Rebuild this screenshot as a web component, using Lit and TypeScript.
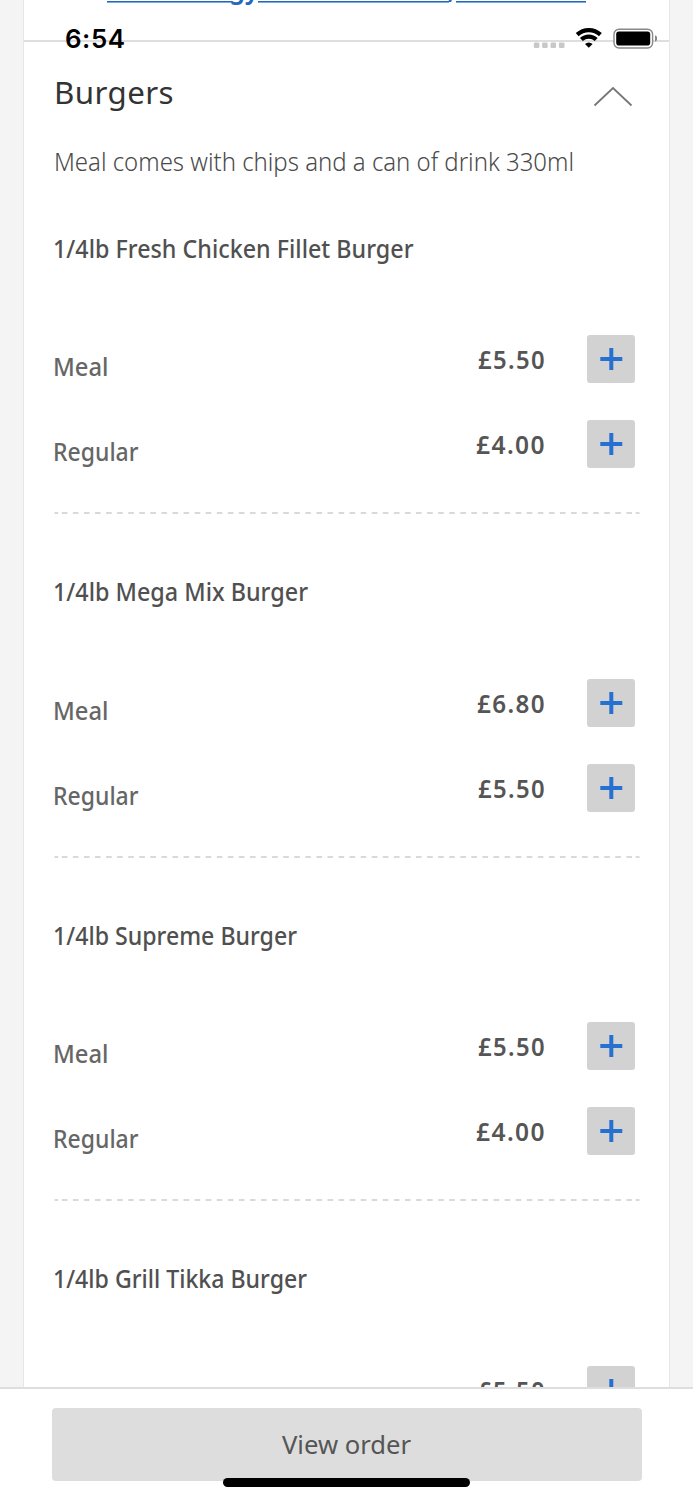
import { LitElement, html, svg, css } from "lit";
import { customElement, property } from "lit/decorators.js";

/** One line of text set to an exact advance width, with its baseline 24px below its top. */
@customElement("fit-text")
class FitText extends LitElement {
  @property() text = "";
  @property({ type: Number }) width = 100;
  static styles = css`
    :host { display: block; height: 32px; }
    svg { display: block; overflow: visible; }
    text { fill: currentColor; }
  `;
  render() {
    return html`<svg width=${this.width} height="32">${svg`<text x="0" y="24" textLength=${this.width} lengthAdjust="spacingAndGlyphs">${this.text}</text>`}</svg>`;
  }
}

interface Option { label: string; width: number; price: string; priceWidth: number; }
interface Item { name: string; width: number; options: Option[]; }

const options = (meal: string, regular: string): Option[] => [
  { label: "Meal", width: 55.5, price: meal, priceWidth: meal === "£6.80" ? 69 : 68 },
  { label: "Regular", width: 85.5, price: regular, priceWidth: regular === "£4.00" ? 70 : 68 },
];

const items: Item[] = [
  { name: "1/4lb Fresh Chicken Fillet Burger", width: 360.5, options: options("£5.50", "£4.00") },
  { name: "1/4lb Mega Mix Burger", width: 255, options: options("£6.80", "£5.50") },
  { name: "1/4lb Supreme Burger", width: 244, options: options("£5.50", "£4.00") },
  { name: "1/4lb Grill Tikka Burger", width: 254, options: options("£5.50", "£4.00") },
];

@customElement("menu-item")
class MenuItem extends LitElement {
  @property({ attribute: false }) item!: Item;
  static styles = css`
    :host { display: flex; flex-direction: column; flex: none; box-sizing: border-box; height: 343.5px; padding: 63.2px 30px 0 29.5px; }
    .name { color: #505050; font-size: 24.6px; font-weight: 500; margin: 0 0 69.5px -1px; }
    .row { display: flex; align-items: flex-start; height: 48px; margin-bottom: 37px; }
    .label { color: #666; font-size: 24.6px; font-weight: 500; padding-top: 17px; flex: 1; margin-left: -0.5px; }
    .price { color: #555; font-size: 24.3px; font-weight: 600; letter-spacing: 1.4px; padding-top: 10.2px; margin-right: 41.2px; }
    .add { width: 48px; height: 48px; padding: 0; border: 0; border-radius: 3px; background: #d2d2d2; margin-right: 3.6px; }
    .add svg { display: block; }
    .dash { display: block; margin-top: 7px; }
  `;
  render() {
    return html`
      <fit-text class="name" .text=${this.item.name} .width=${this.item.width}></fit-text>
      ${this.item.options.map((o) => html`
        <div class="row">
          <fit-text class="label" .text=${o.label} .width=${o.width}></fit-text>
          <fit-text class="price" .text=${o.price} .width=${o.priceWidth}></fit-text>
          <button class="add" aria-label="Add">
            <svg width="48" height="48"><path d="M13.3 24H35.3M24.3 13V35" stroke="#2670d2" stroke-width="4" fill="none" /></svg>
          </button>
        </div>`)}
      <svg class="dash" width="586" height="2" stroke="#d9d9d9" stroke-width="2">
        <path d="M0.5 1H4.2M581.8 1H585.5" /><path d="M7.8 1H578.5" stroke-dasharray="5.6 5.47" />
      </svg>`;
  }
}

@customElement("app-root")
class AppRoot extends LitElement {
  static styles = css`
    :host { display: block; position: relative; height: 1500px; overflow: hidden; background: #f4f4f4; font-family: "Noto Sans", "Open Sans", sans-serif; }
    .page { display: flex; flex-direction: column; height: 1500px; }
    .card { flex: 1; min-height: 0; overflow: hidden; display: flex; flex-direction: column; box-sizing: border-box; margin: 0 23px; background: #fff; border: solid #e6e6e6; border-width: 0 1px; }
    .link { flex: none; box-sizing: border-box; height: 42px; border-bottom: 2px solid #dedede; padding-left: 83px; }
    .clip { width: 479px; height: 5px; overflow: hidden; display: flex; align-items: flex-start; color: #2468bd; font-size: 27px; font-weight: 600;
      background: linear-gradient(90deg, #2468bd 0 125px, transparent 125px 151px, #2468bd 151px 342px, transparent 342px 349px, #2468bd 349px) 0 1px / 100% 1px no-repeat,
        linear-gradient(90deg, #7fa8da 0 125px, transparent 125px 151px, #7fa8da 151px 342px, transparent 342px 349px, #7fa8da 349px) 0 2px / 100% 1px no-repeat; }
    .run { flex: none; margin-top: -26.4px; }
    .low { margin-top: -25.2px; }
    .head { display: flex; justify-content: space-between; flex: none; height: 70px; padding: 38px 36px 0 30px; box-sizing: border-box; color: #333; }
    .title { font-size: 31.5px; font-weight: 400; letter-spacing: 0.4px; }
    .chevron { display: block; margin-top: 4.5px; }
    .desc { flex: none; height: 58.5px; padding: 35px 0 0 30px; box-sizing: border-box; font-size: 24.7px; font-weight: 300; color: #4a4a4a; }
    .footer { flex: none; height: 113px; box-sizing: border-box; border-top: 2px solid #dedede; background: #fff; padding: 18.5px 51.5px 0; }
    .order { display: flex; justify-content: center; box-sizing: border-box; width: 100%; height: 73.5px; border: 0; border-radius: 4px; background: #ddd; padding: 22px 0 0; font-family: inherit; font-size: 24.7px; color: #555; }
    .status { position: absolute; top: 0; left: 0; right: 0; height: 56px; padding: 23.5px 36px 0 65px; box-sizing: border-box; display: flex; justify-content: space-between; color: #000; }
    .time { font-family: Inter, sans-serif; font-size: 26px; font-weight: 600; letter-spacing: 0.5px; }
    .home { position: absolute; left: 222.5px; top: 1478px; width: 247.5px; height: 8.5px; border-radius: 5px; background: #000; }
  `;
  render() {
    return html`
      <div class="page">
        <main class="card">
          <div class="link">
            <div class="clip">
              <fit-text class="run" .text=${"Food allergy"} .width=${152}></fit-text>
              <fit-text class="run low" .text=${"& intolerances,"} .width=${196}></fit-text>
              <fit-text class="run" .text=${"call us now"} .width=${126}></fit-text>
            </div>
          </div>
          <div class="head">
            <fit-text class="title" .text=${"Burgers"} .width=${120}></fit-text>
            <svg class="chevron" width="42" height="24" fill="none" stroke="#777" stroke-width="1.8"><path d="M3.5 20.5L22 3L40.5 20.5" /></svg>
          </div>
          <fit-text class="desc" .text=${"Meal comes with chips and a can of drink 330ml"} .width=${520}></fit-text>
          ${items.map((i) => html`<menu-item .item=${i}></menu-item>`)}
        </main>
        <footer class="footer">
          <button class="order"><fit-text .text=${"View order"} .width=${129}></fit-text></button>
        </footer>
      </div>
      <div class="status">
        <fit-text class="time" .text=${"6:54"} .width=${60.5}></fit-text>
        <svg width="125" height="26">
          <g fill="#c8c8c8">
            <rect x="1.8" y="18.5" width="5.6" height="5.6" rx="1.3" /><rect x="10.1" y="18.5" width="5.6" height="5.6" rx="1.3" />
            <rect x="18.5" y="18.5" width="5.6" height="5.6" rx="1.3" /><rect x="26.9" y="18.5" width="5.6" height="5.6" rx="1.3" />
          </g>
          <g fill="none" stroke="#000" stroke-width="4.2">
            <path d="M45.2 10.6A17 17 0 0 1 68.4 10.6" /><path d="M49.4 15.6A10.6 10.6 0 0 1 64.2 15.6" />
          </g>
          <path d="M56.8 23.8L53 20A5.4 5.4 0 0 1 60.6 20Z" />
          <rect x="82" y="5.2" width="38.6" height="18.8" rx="5" fill="#fff" stroke="#888" stroke-width="1.4" />
          <rect x="84.2" y="7.5" width="34" height="14" rx="2.8" />
          <path d="M123 11.3a3.4 3.4 0 0 1 0 6.4Z" fill="#888" />
        </svg>
      </div>
      <div class="home"></div>`;
  }
}
